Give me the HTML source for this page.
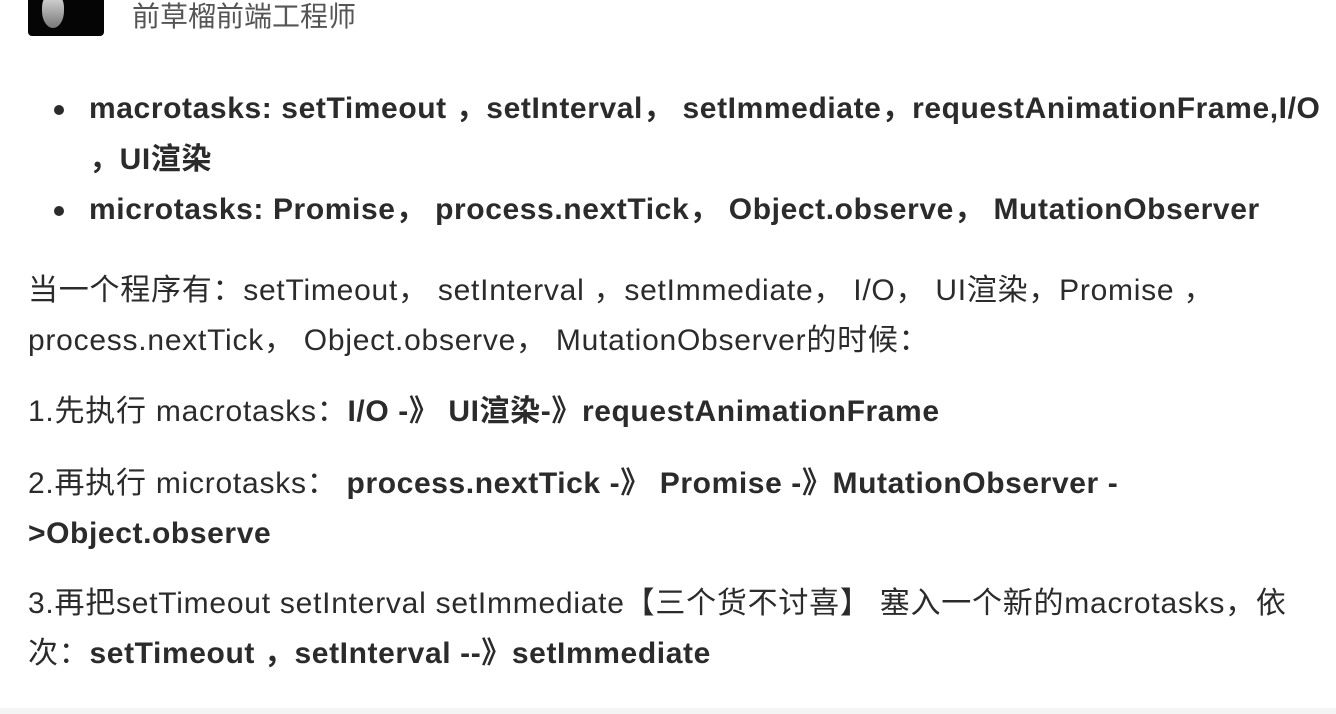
<!DOCTYPE html>
<html><head><meta charset="utf-8"><style>
body{margin:0;width:1336px;height:714px;background:#fff;overflow:hidden;position:relative;font-family:"Liberation Sans","Noto Sans CJK SC",sans-serif;color:#2b2b2b;}
.l{position:absolute;white-space:nowrap;font-size:30px;line-height:34px;letter-spacing:0.6px;}
.r{letter-spacing:0.75px;}
b{font-weight:bold;letter-spacing:0.6px;}
.dot{position:absolute;width:10px;height:10px;border-radius:50%;background:#2b2b2b;}
</style></head><body>
<div style="position:absolute;left:28px;top:0;width:76px;height:36px;background:#050505;border-radius:0 0 4px 4px;overflow:hidden">
<div style="position:absolute;left:14px;top:-6px;width:22px;height:34px;background:linear-gradient(#ddd,#777);border-radius:40% 40% 50% 50%"></div></div>
<div class="l" style="left:132px;top:0;font-size:28px;letter-spacing:0;color:#555">前草榴前端工程师</div>
<div class="dot" style="left:54px;top:105px"></div>
<div class="dot" style="left:54px;top:206px"></div>
<div class="l" style="left:89px;top:92px"><b>macrotasks: setTimeout ，setInterval， setImmediate，requestAnimationFrame,I/O</b></div>
<div class="l" style="left:89px;top:143px"><b>，UI渲染</b></div>
<div class="l" style="left:89px;top:193px"><b>microtasks: Promise， process.nextTick， Object.observe， MutationObserver</b></div>
<div class="l r" style="left:28px;top:274px">当一个程序有：setTimeout， setInterval ，setImmediate， I/O， UI渲染，Promise ，</div>
<div class="l r" style="left:28px;top:324px">process.nextTick， Object.observe， MutationObserver的时候：</div>
<div class="l r" style="left:28px;top:395px">1.先执行 macrotasks：<b>I/O -》 UI渲染-》requestAnimationFrame</b></div>
<div class="l r" style="left:28px;top:467px">2.再执行 microtasks： <b>process.nextTick -》 Promise -》MutationObserver -</b></div>
<div class="l" style="left:28px;top:517px"><b>&gt;Object.observe</b></div>
<div class="l r" style="left:28px;top:587px">3.再把setTimeout setInterval setImmediate【三个货不讨喜】 塞入一个新的macrotasks，依</div>
<div class="l r" style="left:28px;top:637px">次：<b>setTimeout ，setInterval --》setImmediate</b></div>
<div style="position:absolute;left:0;top:708px;width:1336px;height:6px;background:#f4f4f4"></div>
</body></html>
